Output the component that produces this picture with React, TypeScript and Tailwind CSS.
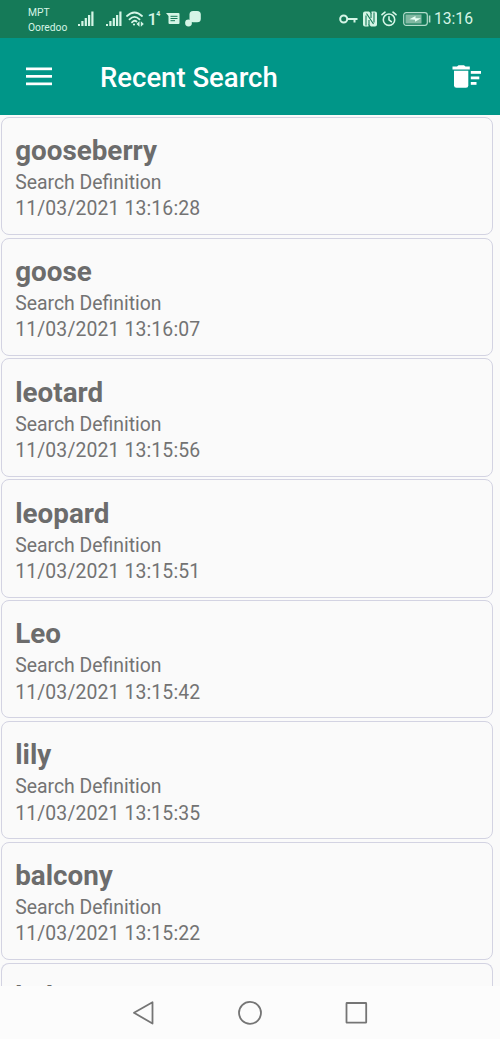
interface SearchItem {
  word: string;
  date: string;
}

const searches: SearchItem[] = [
  { word: 'gooseberry', date: '11/03/2021 13:16:28' },
  { word: 'goose', date: '11/03/2021 13:16:07' },
  { word: 'leotard', date: '11/03/2021 13:15:56' },
  { word: 'leopard', date: '11/03/2021 13:15:51' },
  { word: 'Leo', date: '11/03/2021 13:15:42' },
  { word: 'lily', date: '11/03/2021 13:15:35' },
  { word: 'balcony', date: '11/03/2021 13:15:22' },
];

const SignalIcon = () => (
  <svg width="16" height="16" viewBox="0 0 16 16" fill="#d5f5e6">
    <rect x="0" y="13" width="2" height="2" />
    <rect x="3.3" y="10" width="2.2" height="5" />
    <rect x="6.7" y="7" width="2.2" height="8" />
    <rect x="10" y="4" width="2.2" height="11" />
    <rect x="13.3" y="0.5" width="2.2" height="14.5" />
  </svg>
);

const WifiIcon = () => (
  <svg width="18" height="16" viewBox="0 0 18 16" fill="none" stroke="#d5f5e6" strokeWidth="1.8" strokeLinecap="round">
    <path d="M1 5Q8.500 -2 16 5M3.500 8.300Q8.500 3.500 13.500 8.300M6 11.300Q8.500 8.800 10.500 10.500" />
    <circle cx="8" cy="13.500" r="1.100" fill="#d5f5e6" stroke="none" />
    <path d="M13.500 10.300L10.500 13L13.500 15.700ZM14.800 10.300L17.800 13L14.800 15.700Z" fill="#d5f5e6" stroke="none" />
  </svg>
);

const MessageIcon = () => (
  <svg width="14" height="12" viewBox="0 0 14 12">
    <path d="M0 0H12.500Q13.500 0 13.500 1V10Q13.500 11 12.500 11H3.500Q2.500 11 2.500 10V3Z" fill="#d5f5e6" />
    <path d="M4.500 3.300H11.500M4.500 5.500H11.500M4.500 7.700H9" stroke="#157a58" strokeWidth="1" />
  </svg>
);

const BubbleIcon = () => (
  <svg width="16" height="16" viewBox="0 0 16 16" fill="#d5f5e6">
    <rect x="4.500" y="0" width="11.300" height="11.300" rx="3.600" />
    <circle cx="3.500" cy="12" r="3.400" />
  </svg>
);

const KeyIcon = () => (
  <svg width="19" height="10" viewBox="0 0 19 10" fill="none" stroke="#d5f5e6" strokeWidth="2">
    <circle cx="4.700" cy="5" r="3.500" />
    <path d="M8.200 5H18.500M15.500 5V8.500" />
  </svg>
);

const NfcIcon = () => (
  <svg width="16" height="16" viewBox="0 0 16 16">
    <path d="M3 0.500H7L9.500 3V0.500H13Q15 0.500 15 2.500V13.500Q15 15.500 13 15.500H9L6.500 13V15.500H3Q1 15.500 1 13.500V2.500Q1 0.500 3 0.500Z" fill="#d5f5e6" />
    <path d="M4 14.500V4.500M4.500 2.500L11.500 13M12 1.500V11.500M7 14V9M9 2V7" fill="none" stroke="#157a58" strokeWidth="1.100" />
  </svg>
);

const AlarmIcon = () => (
  <svg width="16" height="16" viewBox="0 0 16 16" fill="none" stroke="#d5f5e6" strokeWidth="1.600" strokeLinecap="round">
    <circle cx="8" cy="8.700" r="5.700" />
    <path d="M8 5.700V8.900L10.300 10.700M1 3.700L4 1.200M12 1.200L15 3.700" />
  </svg>
);

const BatteryIcon = () => (
  <svg width="28" height="14" viewBox="0 0 28 14">
    <rect x="0.700" y="0.700" width="23.600" height="12.600" rx="2.500" fill="none" stroke="#b2dccb" strokeWidth="1.200" />
    <rect x="2.500" y="2.500" width="16" height="9" fill="#82b9a3" />
    <path d="M6.500 7.200L12.500 4V6.300H18L12 9.800V7.700Z" fill="#e9fff5" />
    <rect x="25.800" y="3.500" width="1.600" height="7" fill="#b2dccb" />
  </svg>
);

const StatusBar = () => (
  <div className="flex h-[38px] shrink-0 items-center bg-[#157a58] text-[#d5f5e6]">
    <div className="mt-px ml-[28px] w-[49.500px] text-[10.300px] leading-[15px]">
      <div>MPT</div>
      <div>Ooredoo</div>
    </div>
    <SignalIcon />
    <div className="ml-[12px]"><SignalIcon /></div>
    <div className="ml-[4px]"><WifiIcon /></div>
    <div className="ml-[4px] flex w-[13px] items-start">
      <span className="text-[17px] leading-[18px] font-medium">1</span>
      <span className="-ml-px text-[7px] leading-[8px] font-bold">4</span>
    </div>
    <div className="ml-[5px]"><MessageIcon /></div>
    <div className="ml-[5px]"><BubbleIcon /></div>
    <div className="mr-[27px] ml-auto flex items-center">
      <KeyIcon />
      <div className="ml-[4px]"><NfcIcon /></div>
      <div className="ml-[3px]"><AlarmIcon /></div>
      <div className="ml-[6px]"><BatteryIcon /></div>
      <span className="ml-[3px] text-[15.700px] leading-[20px]">13:16</span>
    </div>
  </div>
);

const AppBar = () => (
  <div className="flex h-[77px] shrink-0 items-center bg-[#009688] text-white">
    <svg className="ml-[26px]" width="26" height="20" viewBox="0 0 26 20" fill="#ffffff">
      <rect y="0.500" width="26" height="2.700" />
      <rect y="8" width="26" height="2.700" />
      <rect y="15.500" width="26" height="2.700" />
    </svg>
    <h1 className="mt-[2px] ml-[48px] text-[27.500px] leading-[36px] font-medium">Recent Search</h1>
    <svg className="mr-[18px] ml-auto" width="30" height="24" viewBox="0 0 30 24" fill="#ffffff">
      <path d="M0.500 1.500H5L6.500 0.300H12L13.500 1.500H17.800V4.500H0.500Z" />
      <path d="M2 5.800H16.300V20.500Q16.300 22.800 14 22.800H4.500Q2 22.800 2 20.500Z" />
      <rect x="18.800" y="6" width="10.200" height="2.800" />
      <rect x="18.800" y="11.500" width="8.500" height="2.800" />
      <rect x="18.800" y="17" width="5.700" height="2.800" />
    </svg>
  </div>
);

const SearchCard = ({ word, date }: SearchItem) => (
  <div className="h-[118.300px] shrink-0 rounded-[8px] border border-[#d3d3e2] pt-[14.300px] pl-[13.200px] text-[#737373]">
    <div className="text-[27.800px] leading-[38px] font-bold text-[#6c6c6c]">{word}</div>
    <div className="text-[19.400px] leading-[26.200px]">Search Definition</div>
    <div className="text-[19.400px] leading-[26.200px] tracking-[0.120px]">{date}</div>
  </div>
);

const NavBar = () => (
  <div className="flex h-[53px] shrink-0 items-center justify-center gap-[81.500px] bg-[#fcfcfc]">
    <svg width="24" height="26" viewBox="0 0 24 26" fill="none" stroke="#757575" strokeWidth="1.800" strokeLinejoin="round">
      <path d="M20.500 2.200V23.500L2 12.800Z" />
    </svg>
    <svg width="26" height="26" viewBox="0 0 26 26" fill="none" stroke="#757575" strokeWidth="1.800">
      <circle cx="13" cy="12.800" r="11" />
    </svg>
    <svg width="24" height="26" viewBox="0 0 24 26" fill="none" stroke="#757575" strokeWidth="1.800">
      <rect x="1.500" y="3" width="19.700" height="19.700" rx="0.500" />
    </svg>
  </div>
);

export default function App() {
  return (
    <div className="flex h-[1039px] w-[500px] flex-col overflow-hidden bg-[#fafafa] font-[Roboto,sans-serif]">
      <StatusBar />
      <AppBar />
      <div className="flex min-h-0 flex-1 flex-col gap-[2.550px] overflow-hidden pt-[1.800px] pr-[7px] pl-[1px]">
        {searches.map((item) => (
          <SearchCard key={item.date} word={item.word} date={item.date} />
        ))}
        {/* last row scrolls under the navigation bar */}
        <div className="h-[24px] shrink-0 overflow-hidden rounded-t-[8px] border border-b-0 border-[#d3d3e2] pt-[14.300px] pl-[13.200px]">
          <div className="text-[27.800px] leading-[38px] font-bold text-[#6c6c6c]">bal</div>
        </div>
      </div>
      <NavBar />
    </div>
  );
}
